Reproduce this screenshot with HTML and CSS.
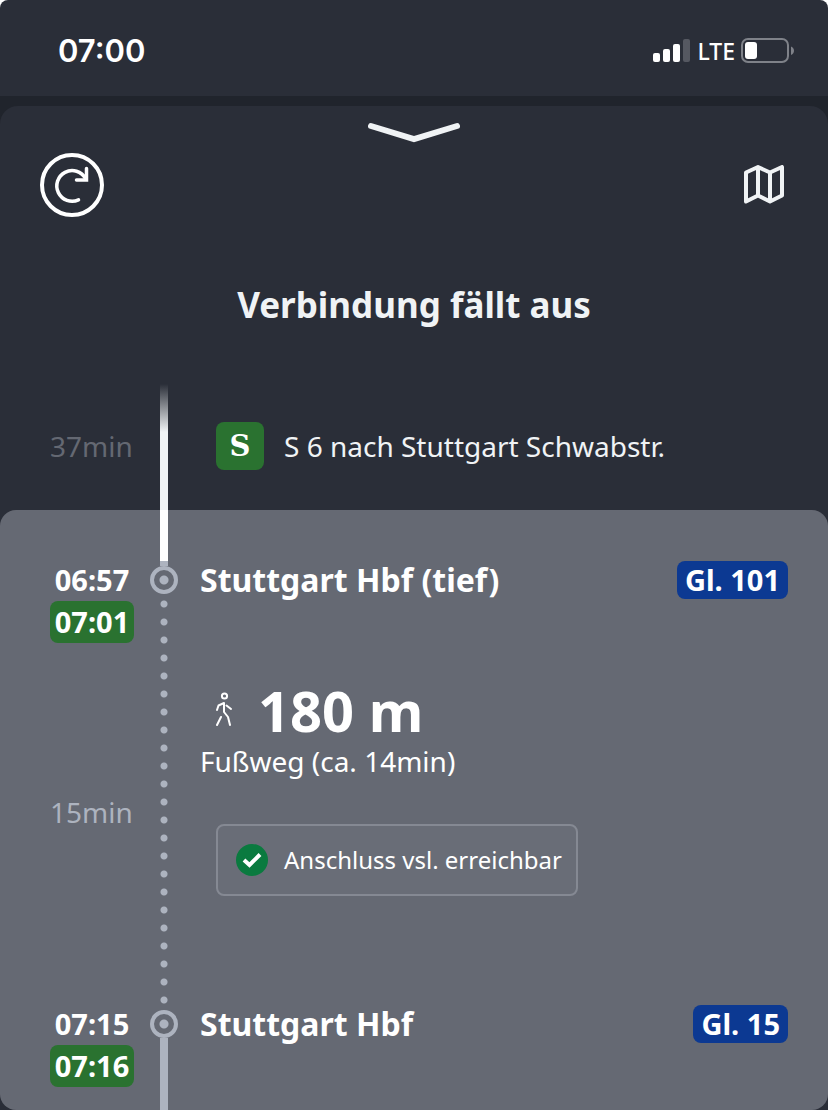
FILE: index.html
```html
<!DOCTYPE html>
<html lang="de">

<head>
    <meta charset="UTF-8">
    <meta name="viewport" content="width=device-width, initial-scale=1.0">
    <title>Verbindung</title>
    <link rel="stylesheet" href="styles.css">
</head>

<body>

    <header class="status-bar">
        <time class="clock">07:00</time>
        <div class="status-icons">
            <svg width="38" height="24" viewBox="0 0 38 24" fill="#fff" aria-hidden="true">
                <rect x="0" y="14" width="7" height="9" rx="2" />
                <rect x="10" y="10" width="7" height="13" rx="2" />
                <rect x="20" y="5" width="7" height="18" rx="2" />
                <rect x="30" y="0" width="7" height="23" rx="2" fill="#555861" />
            </svg>
            <span class="network">LTE</span>
            <svg width="54" height="26" viewBox="0 0 54 26" aria-hidden="true">
                <rect x="1" y="1" width="46" height="23" rx="6" fill="none" stroke="#7f8289" stroke-width="2" />
                <rect x="4" y="4" width="12" height="17" rx="3" fill="#fff" />
                <path d="M50 8.500C54 10 54 15.500 50 17Z" fill="#7f8289" />
            </svg>
        </div>
    </header>

    <div class="backdrop">
        <main class="sheet">
            <button class="icon-button handle" aria-label="Schließen">
                <svg width="92" height="21" viewBox="0 0 92 21" fill="none" stroke="#f0f3f5" stroke-width="6"
                    stroke-linecap="round">
                    <path d="M3 4L46 17L89 4" />
                </svg>
            </button>

            <div class="toolbar">
                <button class="icon-button" aria-label="Aktualisieren">
                    <svg width="64" height="64" viewBox="0 0 64 64" fill="none" stroke="#fff" stroke-linecap="round">
                        <circle cx="32" cy="32" r="30" stroke-width="4" />
                        <path d="M38.500 46.800A15.300 15.300 0 1 1 45.500 25.500" stroke-width="3.500" />
                        <path d="M46.500 15.500V27H36.500" stroke-width="3.500" />
                    </svg>
                </button>
                <button class="icon-button" aria-label="Karte">
                    <svg width="40" height="40" viewBox="0 0 40 40" fill="none" stroke="#f0f3f5" stroke-width="4"
                        stroke-linejoin="round">
                        <path d="M2 7.500L14 2L26 7.500L38 2V30.500L26 36.500L14 30.500L2 36.500ZM14 2V30.500M26 7.500V36.500" />
                    </svg>
                </button>
            </div>

            <h1>Verbindung fällt aus</h1>

            <!-- Train leg -->
            <section class="row leg">
                <div class="duration">37min</div>
                <div class="rail">
                    <div class="line line-fade"></div>
                </div>
                <div class="train">
                    <span class="product">S</span>
                    <span>S 6 nach Stuttgart Schwabstr.</span>
                </div>
            </section>

            <!-- Transfer -->
            <section class="transfer">
                <div class="row stop-from">
                    <div class="times">
                        <time class="planned">06:57</time>
                        <time class="actual">07:01</time>
                        <div class="duration">15min</div>
                    </div>
                    <div class="rail">
                        <div class="line line-arrive"></div>
                        <div class="node"></div>
                        <div class="dots"></div>
                    </div>
                    <div class="details">
                        <div class="station">
                            <h2>Stuttgart Hbf (tief)</h2>
                            <span class="platform">Gl. 101</span>
                        </div>
                        <div class="distance">
                            <svg width="16" height="36" viewBox="0 0 16 36" fill="none" stroke="#fff"
                                stroke-width="2" stroke-linecap="round" stroke-linejoin="round" aria-hidden="true">
                                <circle cx="8.500" cy="4" r="2.600" />
                                <path d="M1 18L2.500 13.500L8 11V20L12 25L14 33M10.500 13.500L15 17M5 25L1 33" />
                            </svg>
                            <strong>180 m</strong>
                        </div>
                        <p class="walk">Fußweg (ca. 14min)</p>
                        <div class="notice">
                            <svg width="32" height="32" viewBox="0 0 32 32" aria-hidden="true">
                                <circle cx="16" cy="16" r="16" fill="#0a7a3f" />
                                <path d="M8 16L13.500 21L24 10.500" fill="none" stroke="#fff" stroke-width="4" />
                            </svg>
                            <span>Anschluss vsl. erreichbar</span>
                        </div>
                    </div>
                </div>

                <div class="row stop-to">
                    <div class="times">
                        <time class="planned">07:15</time>
                        <time class="actual">07:16</time>
                    </div>
                    <div class="rail">
                        <div class="node"></div>
                        <div class="line line-next"></div>
                    </div>
                    <div class="details">
                        <div class="station">
                            <h2>Stuttgart Hbf</h2>
                            <span class="platform">Gl. 15</span>
                        </div>
                    </div>
                </div>
            </section>
        </main>
    </div>

</body>

</html>
```
FILE: styles.css
```css
* {
    margin: 0;
    padding: 0;
    box-sizing: border-box;
}

html {
    background-color: #fff;
}

body {
    display: flex;
    flex-direction: column;
    min-height: 100vh;
    font-family: "Noto Sans", sans-serif;
    font-size: 28px;
    line-height: 38px;
    color: #fff;
}

svg {
    display: block;
    flex: none;
}

/* Status bar */
.status-bar {
    display: flex;
    align-items: center;
    justify-content: space-between;
    height: 96px;
    padding: 5px 33px 0 58px;
    background-color: #2a2e38;
    border-radius: 8px 8px 0 0;
}

.clock {
    font-family: Inter, sans-serif;
    font-size: 31px;
    font-weight: 600;
}

.status-icons {
    display: flex;
    align-items: center;
    gap: 6px;
}

.network {
    font-size: 23px;
    font-weight: 500;
}

/* Sheet */
.backdrop {
    display: flex;
    flex: 1;
    padding-top: 10px;
    background-color: #20242c;
}

.sheet {
    display: flex;
    flex: 1;
    flex-direction: column;
    padding-top: 16px;
    background-color: #2a2e38;
    border-radius: 18px 18px 0 0;
}

.icon-button {
    background: none;
    border: none;
    cursor: pointer;
}

.handle {
    align-self: center;
}

.toolbar {
    display: flex;
    align-items: center;
    justify-content: space-between;
    margin-top: 10px;
    padding: 0 44px 0 40px;
}

h1 {
    margin: 65px 0 56px;
    font-size: 35px;
    line-height: 46px;
    text-align: center;
    color: #f0f3f5;
}

/* Timeline rows: times, rail, details */
.row {
    display: grid;
    grid-template-columns: 84px 28px 1fr;
    padding: 0 40px 0 50px;
    column-gap: 16px;
}

.rail {
    display: flex;
    flex-direction: column;
    align-items: center;
}

.line {
    flex: 1;
    width: 8px;
    background-color: #adb3bf;
}

.line-fade {
    background: linear-gradient(transparent, #f0f3f5 48px);
}

.line-arrive {
    flex: none;
    height: 56px;
    background: linear-gradient(#fff 51px, #adb3bf 51px);
}

.node {
    flex: none;
    width: 28px;
    height: 28px;
    border: 4px solid #adb3bf;
    border-radius: 50%;
    background: radial-gradient(circle, #adb3bf 4px, transparent 5px);
}

.dots {
    flex: 1;
    width: 8px;
    margin-top: 1px;
    background: radial-gradient(circle, #adb3bf 3px, transparent 4px) top / 8px 18px repeat-y;
}

.duration {
    color: #adb3bf;
}

/* Train leg */
.leg {
    height: 126px;
}

.leg .duration {
    padding-top: 43px;
    color: #646872;
}

.train {
    display: flex;
    align-items: center;
    gap: 20px;
    height: 48px;
    margin: 38px 0 0 22px;
    color: #f0f3f5;
}

.product {
    width: 48px;
    height: 48px;
    background-color: #2a7230;
    border-radius: 8px;
    font-family: "DejaVu Serif", serif;
    font-size: 29px;
    font-weight: 700;
    line-height: 48px;
    text-align: center;
    color: #fff;
}

/* Transfer */
.transfer {
    display: flex;
    flex: 1;
    flex-direction: column;
    background-color: #656973;
    border-radius: 16px;
}

.stop-from .times,
.stop-from .details {
    padding-top: 51px;
}

.stop-to {
    flex: 1;
}

.stop-to .rail {
    padding-top: 5px;
}

.times {
    display: flex;
    flex-direction: column;
    padding-bottom: 22px;
}

.planned,
.actual {
    font-size: 29px;
    font-weight: 700;
    text-align: center;
}

.actual {
    margin-top: 2px;
    background-color: #2a7230;
    border-radius: 8px;
    line-height: 42px;
}

.times .duration {
    margin-top: 150px;
}

.details {
    padding-left: 6px;
}

.station {
    display: flex;
    align-items: center;
    justify-content: space-between;
}

h2 {
    font-size: 32px;
}

.platform {
    padding: 0 8px;
    background-color: #0c3992;
    border-radius: 8px;
    font-size: 29px;
    font-weight: 700;
}

.distance {
    display: flex;
    align-items: center;
    gap: 26px;
    margin-top: 79px;
    padding-left: 16px;
    font-size: 56px;
    line-height: 64px;
}

.notice {
    display: flex;
    align-items: center;
    gap: 16px;
    width: fit-content;
    height: 72px;
    margin: 44px 0 109px 16px;
    padding: 0 14px 0 18px;
    background-color: #696d77;
    border: 2px solid #858993;
    border-radius: 8px;
    font-size: 24px;
}
```
